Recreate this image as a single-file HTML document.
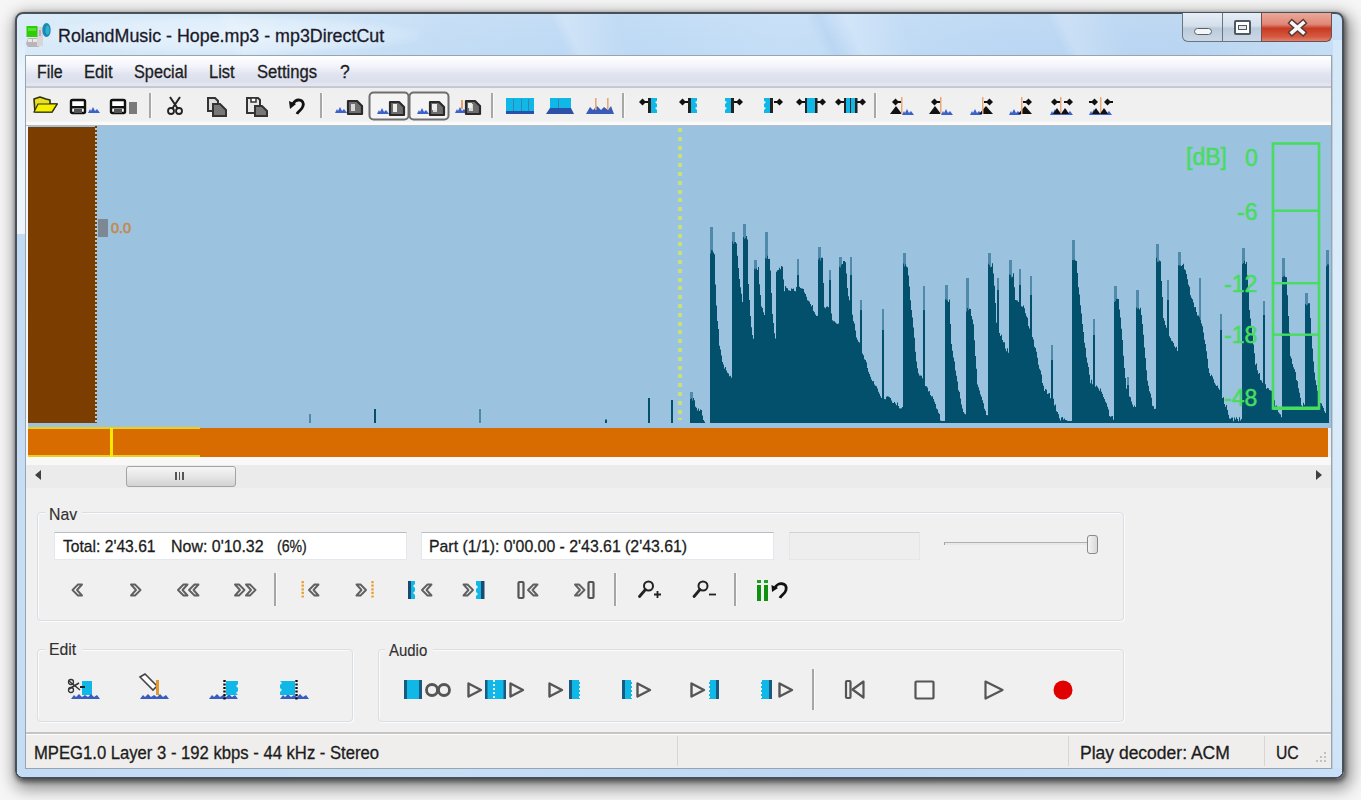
<!DOCTYPE html>
<html><head><meta charset="utf-8">
<style>
*{box-sizing:border-box;margin:0;padding:0}
html,body{width:1361px;height:800px;overflow:hidden;background:#f6f6f6;font-family:"Liberation Sans",sans-serif;}
.a{position:absolute}
.t{position:absolute;white-space:pre;color:#1c1c1c;transform-origin:0 0;line-height:1;-webkit-text-stroke:0.3px currentColor}
#win{left:15px;top:12px;width:1329px;height:767px;border-radius:8px;border:2px solid #4a5058;
 background:linear-gradient(90deg,#d8eaf8 0%,#cfe4f7 20%,#c2dcf5 32%,#bcd8f4 45%,#c4def7 58%,#bad6f3 75%,#b8d4f1 88%,#c6def5 100%);
 box-shadow:1px 2px 4px 1px rgba(0,0,0,0.45),3px 6px 16px 4px rgba(0,0,0,0.42);}
#client{left:25px;top:55px;width:1307px;height:714px;background:#f0f0f0;border:1px solid #98a4b0;box-shadow:1px 0 0 #c0ccd8}
svg{overflow:visible}
</style></head><body>
<div id="win" class="a"></div>
<div class="a" style="left:17px;top:14px;width:1325px;height:42px;border-radius:6px 6px 0 0;background:linear-gradient(180deg,rgba(255,255,255,0.1),rgba(255,255,255,0))"></div>
<div class="a" style="left:17px;top:14px;width:1325px;height:42px;background:linear-gradient(65deg,transparent 16%,rgba(255,255,255,0.18) 17%,transparent 21%,transparent 41%,rgba(255,255,255,0.22) 42%,transparent 46%,transparent 60%,rgba(120,160,210,0.12) 61%,rgba(255,255,255,0.2) 63%,transparent 67%,transparent 78%,rgba(255,255,255,0.2) 79%,transparent 83%)"></div>
<div class="a" style="left:40px;top:16px;width:380px;height:38px;border-radius:20px;background:radial-gradient(ellipse at center,rgba(240,248,255,0.7) 0%,rgba(240,248,255,0.35) 55%,rgba(240,248,255,0) 75%)"></div>
<div class="a" style="left:17px;top:40px;width:8px;height:194px;background:linear-gradient(#dcecf8,#eaf4fc 15%,#eef6fc)"></div>
<div class="a" style="left:17px;top:234px;width:8px;height:540px;background:linear-gradient(#c2dbf4,#c8def5 60%,#c4dcf4)"></div>
<div class="a" style="left:1333px;top:40px;width:9px;height:734px;background:linear-gradient(#d4e8f8,#dcedfa 40%,#cfe4f7)"></div>
<div class="a" style="left:17px;top:768px;width:1325px;height:9px;border-radius:0 0 6px 6px;background:linear-gradient(90deg,#c4dcf4,#c8e0f6 30%,#bcd8f4 60%,#c8e0f8)"></div>
<div id="client" class="a"></div>
<!-- title icon -->
<svg class="a" style="left:20px;top:18px" width="40" height="32">
 <path d="M6 26 L8 20 H20 L22 27 L18 29 H8 Z" fill="#b8b4b8"/>
 <rect x="8" y="21" width="4" height="3" fill="#e8e8e8"/><rect x="13" y="21" width="4" height="3" fill="#e8e8e8"/>
 <rect x="17" y="9" width="6" height="19" fill="#d8d4d8"/><rect x="19" y="12" width="2" height="6" fill="#b8a8c8"/>
 <rect x="6.5" y="8" width="11" height="11" fill="#30cc08"/><rect x="8" y="10" width="8" height="3" fill="#58e030"/>
 <ellipse cx="26.5" cy="12" rx="4.2" ry="7" fill="#1a88b0"/><ellipse cx="27.5" cy="12" rx="2" ry="4.5" fill="#30b0d0"/>
</svg>
<div class="t" style="left:58px;top:27px;font-size:18.4px;color:#1a1a2a;transform:scaleX(0.97)">RolandMusic - Hope.mp3 - mp3DirectCut</div>
<!-- caption buttons -->
<div class="a" style="left:1182px;top:13px;width:41px;height:29px;border:1px solid #6a7480;border-top:none;border-radius:0 0 0 6px;background:linear-gradient(#e6eef6 0%,#d4e0ec 45%,#bccbdb 55%,#cad8e6 100%)"></div>
<div class="a" style="left:1222px;top:13px;width:40px;height:29px;border:1px solid #6a7480;border-top:none;background:linear-gradient(#e6eef6 0%,#d4e0ec 45%,#bccbdb 55%,#cad8e6 100%)"></div>
<div class="a" style="left:1261px;top:13px;width:71px;height:29px;border:1px solid #6a5050;border-top:none;border-radius:0 0 6px 0;background:linear-gradient(#eaa898 0%,#e08878 40%,#c83a22 55%,#d45a40 85%,#e08070 100%)"></div>
<div class="a" style="left:1194px;top:28px;width:18px;height:7px;border:1.5px solid #5a6068;border-radius:3.5px;background:#f4f6f8"></div>
<div class="a" style="left:1234px;top:20px;width:17px;height:15px;border:2px solid #505860;border-radius:2px;background:#fff"></div>
<div class="a" style="left:1238px;top:25px;width:9px;height:5px;border:1.5px solid #505860;background:#dfe8f0"></div>
<svg class="a" style="left:1286px;top:18px" width="24" height="20">
 <path d="M6 5 L17 14.5 M17 5 L6 14.5" stroke="#5a3a36" stroke-width="6.4" stroke-linecap="square"/>
 <path d="M6 5 L17 14.5 M17 5 L6 14.5" stroke="#f8f8f8" stroke-width="3.6" stroke-linecap="square"/>
</svg>
<!-- menu -->
<div class="a" style="left:26px;top:56px;width:1305px;height:32px;background:linear-gradient(#ffffff 0%,#f4f5fb 30%,#dfe2ef 60%,#dcdfec 80%,#e6e8f2 92%,#c8cad4 94%,#c4c6ce 100%)"></div>
<div class="t" style="left:37px;top:64px;font-size:17.5px;transform:scaleX(0.91)">File</div>
<div class="t" style="left:84px;top:64px;font-size:17.5px;transform:scaleX(0.95)">Edit</div>
<div class="t" style="left:134px;top:64px;font-size:17.5px;transform:scaleX(0.93)">Special</div>
<div class="t" style="left:209px;top:64px;font-size:17.5px;transform:scaleX(0.94)">List</div>
<div class="t" style="left:257px;top:64px;font-size:17.5px;transform:scaleX(0.95)">Settings</div>
<div class="t" style="left:340px;top:64px;font-size:17.5px">?</div>
<!-- toolbar -->
<div class="a" style="left:26px;top:88px;width:1305px;height:37px;background:linear-gradient(#eeeeee,#f0f0f0 20%,#f0f0f0 85%,#f8f8f8)"></div>
<svg class="a" style="left:0;top:0" width="1361" height="130">

<!-- folder -->
<path d="M34 99 L40 97 L46 99 L50 100 V104 L57 104 L52 112 H35 Z" fill="#e8e020" stroke="#303010" stroke-width="1.6" stroke-linejoin="round"/>
<path d="M38 104 H57 L52 112 H34 Z" fill="#f4f000" stroke="#303010" stroke-width="1.2"/>
<!-- save 1 -->
<rect x="71" y="100" width="14" height="13" rx="1.5" fill="#fff" stroke="#111" stroke-width="2.4"/>
<rect x="71" y="106" width="14" height="2.5" fill="#111"/><rect x="74" y="109" width="8" height="4" fill="#555"/>
<g transform="translate(88,105)"><path d="M0 8 L2 4 L3 6 L5 2 L7 6 L9 4 L12 8 Z" fill="#3a62c8"/></g>
<!-- save 2 -->
<rect x="111" y="100" width="14" height="13" rx="1.5" fill="#fff" stroke="#111" stroke-width="2.4"/>
<rect x="111" y="106" width="14" height="2.5" fill="#111"/><rect x="114" y="109" width="8" height="4" fill="#555"/>
<rect x="129" y="102" width="8" height="12" fill="#7a7a7a"/>
<g transform="translate(149,93)"><rect x="0" y="0" width="2" height="25" fill="#a8a8a8"/><rect x="2" y="0" width="1" height="25" fill="#fafafa"/></g>
<!-- scissors -->
<path d="M170 97 L178 109 M180 97 L172 109" stroke="#222" stroke-width="2"/>
<circle cx="171" cy="111" r="3" fill="none" stroke="#222" stroke-width="1.8"/><circle cx="179" cy="111" r="3" fill="none" stroke="#222" stroke-width="1.8"/>
<!-- copy -->
<path d="M208 98 H215 L218 101 V111 H208 Z" fill="#ddd" stroke="#333" stroke-width="2"/>
<path d="M213 104 H220 L226 110 V116 H213 Z" fill="#777" stroke="#333" stroke-width="2"/>
<!-- paste -->
<path d="M247 98 H258 L260 100 V113 H247 Z" fill="#e8e8e8" stroke="#333" stroke-width="2"/>
<rect x="251" y="98" width="5" height="4" fill="#fff" stroke="#333" stroke-width="1.5"/>
<path d="M255 106 H262 L267 111 V116 H255 Z" fill="#777" stroke="#333" stroke-width="2"/>
<!-- undo -->
<path d="M293 104 C296 98,305 99,303 106 C302 110,298 111,297 114" fill="none" stroke="#111" stroke-width="2.8"/>
<path d="M289 101 L296 104 L290 109 Z" fill="#111"/>
<g transform="translate(320,93)"><rect x="0" y="0" width="2" height="25" fill="#a8a8a8"/><rect x="2" y="0" width="1" height="25" fill="#fafafa"/></g>
<!-- wave+doc icons -->
<g transform="translate(335,105)"><path d="M0 8 L2 4 L3 6 L5 2 L7 6 L9 4 L12 8 Z" fill="#3a62c8"/></g><g transform="translate(347,100)"><path d="M1 1 H10 L15 6 V14 H1 Z" fill="#6e6e6e" stroke="#2a2a2a" stroke-width="2.2" stroke-linejoin="round"/><rect x="4" y="4" width="4" height="7" fill="#d8d8d8"/></g>
<rect x="369.5" y="92.5" width="39" height="27" rx="4" fill="#f4f4f4" stroke="#6e6e6e" stroke-width="2"/>
<g transform="translate(377,106)"><path d="M0 8 L2 4 L3 6 L5 2 L7 6 L9 4 L12 8 Z" fill="#3a62c8"/></g><g transform="translate(389,101)"><path d="M1 1 H10 L15 6 V14 H1 Z" fill="#6e6e6e" stroke="#2a2a2a" stroke-width="2.2" stroke-linejoin="round"/><rect x="4" y="4" width="4" height="7" fill="#d8d8d8"/></g><rect x="393" y="104" width="4" height="8" fill="#eee"/>
<rect x="409.5" y="92.5" width="39" height="27" rx="4" fill="#f4f4f4" stroke="#6e6e6e" stroke-width="2"/>
<g transform="translate(417,106)"><path d="M0 8 L2 4 L3 6 L5 2 L7 6 L9 4 L12 8 Z" fill="#3a62c8"/></g><g transform="translate(429,101)"><path d="M1 1 H10 L15 6 V14 H1 Z" fill="#6e6e6e" stroke="#2a2a2a" stroke-width="2.2" stroke-linejoin="round"/><rect x="4" y="4" width="4" height="7" fill="#d8d8d8"/></g><rect x="432" y="104" width="5" height="6" fill="#eee"/>
<g transform="translate(455,105)"><path d="M0 8 L2 4 L3 6 L5 2 L7 6 L9 4 L12 8 Z" fill="#3a62c8"/></g><rect x="461" y="100" width="2" height="9" fill="#e8a070"/><g transform="translate(465,100)"><path d="M1 1 H10 L15 6 V14 H1 Z" fill="#6e6e6e" stroke="#2a2a2a" stroke-width="2.2" stroke-linejoin="round"/><rect x="4" y="4" width="4" height="7" fill="#d8d8d8"/></g><rect x="468" y="103" width="4" height="5" fill="#eee"/>
<g transform="translate(491,93)"><rect x="0" y="0" width="2" height="25" fill="#a8a8a8"/><rect x="2" y="0" width="1" height="25" fill="#fafafa"/></g>
<!-- cyan blocks -->
<rect x="506" y="98" width="28" height="14" fill="#10b8e8"/><rect x="513" y="99" width="1" height="12" fill="#3a80b0"/><rect x="521" y="99" width="1" height="12" fill="#3a80b0"/><rect x="528" y="99" width="1" height="12" fill="#3a80b0"/>
<rect x="506" y="111" width="28" height="3" fill="#2a50a8"/>
<rect x="550" y="98" width="21" height="12" fill="#10b8e8"/><rect x="558" y="99" width="1" height="10" fill="#3a80b0"/>
<path d="M546 114 L550 108 H571 L574 114 Z" fill="#2a50a8"/>
<path d="M586 114 L590 107 L593 110 L597 106 L601 110 L604 107 L608 110 L611 106 L614 114 Z" fill="#3a5cb8"/>
<rect x="595" y="98" width="1.6" height="12" fill="#e6a878"/><rect x="607" y="98" width="1.6" height="12" fill="#e6a878"/>
<g transform="translate(622,93)"><rect x="0" y="0" width="2" height="25" fill="#a8a8a8"/><rect x="2" y="0" width="1" height="25" fill="#fafafa"/></g>
<!-- arrow + cyan bars -->
<g transform="translate(639,98)"><path d="M0 4 L3.5 0.5 L7 4 L3.5 7.5 Z" fill="#111"/><rect x="5" y="3" width="4" height="2" fill="#111"/></g><rect x="648" y="98" width="3" height="15" fill="#222"/><path d="M651 98 H657 V101 L655 102 L657 104 V107 L655 108 L657 110 V113 H651 Z" fill="#10b8e8"/>
<g transform="translate(679,98)"><path d="M0 4 L3.5 0.5 L7 4 L3.5 7.5 Z" fill="#111"/><rect x="5" y="3" width="4" height="2" fill="#111"/></g><rect x="688" y="98" width="3" height="15" fill="#222"/><path d="M691 98 H697 V101 L695 102 L697 104 V107 L695 108 L697 110 V113 H691 Z" fill="#10b8e8"/>
<path d="M725 98 H731 V113 H725 V110 L727 108 L725 107 V104 L727 102 L725 101 Z" fill="#10b8e8"/><rect x="731" y="98" width="3" height="15" fill="#222"/><g transform="translate(734,98)"><path d="M9 4 L5.5 0.5 L2 4 L5.5 7.5 Z" fill="#111"/><rect x="0" y="3" width="4" height="2" fill="#111"/></g>
<path d="M764 98 H770 V113 H764 V110 L766 108 L764 107 V104 L766 102 L764 101 Z" fill="#10b8e8"/><rect x="770" y="98" width="3" height="15" fill="#222"/><g transform="translate(774,98)"><path d="M9 4 L5.5 0.5 L2 4 L5.5 7.5 Z" fill="#111"/><rect x="0" y="3" width="4" height="2" fill="#111"/></g>
<g transform="translate(796,98)"><path d="M0 4 L3.5 0.5 L7 4 L3.5 7.5 Z" fill="#111"/><rect x="5" y="3" width="4" height="2" fill="#111"/></g><rect x="805" y="98" width="2.5" height="15" fill="#222"/><rect x="807" y="98" width="9" height="15" fill="#10b8e8"/><rect x="815" y="98" width="2.5" height="15" fill="#222"/><g transform="translate(817,98)"><path d="M9 4 L5.5 0.5 L2 4 L5.5 7.5 Z" fill="#111"/><rect x="0" y="3" width="4" height="2" fill="#111"/></g>
<g transform="translate(835,98)"><path d="M0 4 L3.5 0.5 L7 4 L3.5 7.5 Z" fill="#111"/><rect x="5" y="3" width="4" height="2" fill="#111"/></g><rect x="844" y="98" width="2.5" height="15" fill="#222"/><rect x="846" y="98" width="4" height="15" fill="#10b8e8"/><rect x="850" y="98" width="1.5" height="15" fill="#222"/><rect x="851" y="98" width="4" height="15" fill="#10b8e8"/><rect x="855" y="98" width="2.5" height="15" fill="#222"/><g transform="translate(857,98)"><path d="M9 4 L5.5 0.5 L2 4 L5.5 7.5 Z" fill="#111"/><rect x="0" y="3" width="4" height="2" fill="#111"/></g>
<g transform="translate(874,93)"><rect x="0" y="0" width="2" height="25" fill="#a8a8a8"/><rect x="2" y="0" width="1" height="25" fill="#fafafa"/></g>
<!-- marker icons -->
<g><path d="M890 114 L896 106 L902 114 Z" fill="#111"/><g transform="translate(892,98)"><path d="M0 4 L3.5 0.5 L7 4 L3.5 7.5 Z" fill="#111"/><rect x="5" y="3" width="4" height="2" fill="#111"/></g><rect x="901" y="97" width="1.5" height="17" fill="#e6a878"/><g transform="translate(902,107)"><path d="M0 8 L2 4 L3 6 L5 2 L7 6 L9 4 L12 8 Z" fill="#3a62c8"/></g></g>
<g transform="translate(39,0)"><path d="M890 114 L896 106 L902 114 Z" fill="#111"/><g transform="translate(892,98)"><path d="M0 4 L3.5 0.5 L7 4 L3.5 7.5 Z" fill="#111"/><rect x="5" y="3" width="4" height="2" fill="#111"/></g><rect x="901" y="97" width="1.5" height="17" fill="#e6a878"/><g transform="translate(902,107)"><path d="M0 8 L2 4 L3 6 L5 2 L7 6 L9 4 L12 8 Z" fill="#3a62c8"/></g></g>
<g><g transform="translate(970,107)"><path d="M0 8 L2 4 L3 6 L5 2 L7 6 L9 4 L12 8 Z" fill="#3a62c8"/></g><path d="M979 114 L986 106 L993 114 Z" fill="#111"/><rect x="982" y="97" width="1.5" height="17" fill="#e6a878"/><g transform="translate(984,98)"><path d="M9 4 L5.5 0.5 L2 4 L5.5 7.5 Z" fill="#111"/><rect x="0" y="3" width="4" height="2" fill="#111"/></g></g>
<g transform="translate(39,0)"><g transform="translate(970,107)"><path d="M0 8 L2 4 L3 6 L5 2 L7 6 L9 4 L12 8 Z" fill="#3a62c8"/></g><path d="M979 114 L986 106 L993 114 Z" fill="#111"/><rect x="982" y="97" width="1.5" height="17" fill="#e6a878"/><g transform="translate(984,98)"><path d="M9 4 L5.5 0.5 L2 4 L5.5 7.5 Z" fill="#111"/><rect x="0" y="3" width="4" height="2" fill="#111"/></g></g>
<g><g transform="translate(1050,107)"><path d="M0 8 L2 4 L3 6 L5 2 L7 6 L9 4 L12 8 Z" fill="#3a62c8"/></g><g transform="translate(1061,107)"><path d="M0 8 L2 4 L3 6 L5 2 L7 6 L9 4 L12 8 Z" fill="#3a62c8"/></g><g transform="translate(1051,98)"><path d="M0 4 L3.5 0.5 L7 4 L3.5 7.5 Z" fill="#111"/><rect x="5" y="3" width="4" height="2" fill="#111"/></g><g transform="translate(1064,98)"><path d="M9 4 L5.5 0.5 L2 4 L5.5 7.5 Z" fill="#111"/><rect x="0" y="3" width="4" height="2" fill="#111"/></g><rect x="1060" y="97" width="1.5" height="17" fill="#e6a878"/><path d="M1053 114 L1057 108 L1061 114 Z M1061 114 L1065 108 L1069 114 Z" fill="#111"/></g>
<g><g transform="translate(1089,107)"><path d="M0 8 L2 4 L3 6 L5 2 L7 6 L9 4 L12 8 Z" fill="#3a62c8"/></g><g transform="translate(1100,107)"><path d="M0 8 L2 4 L3 6 L5 2 L7 6 L9 4 L12 8 Z" fill="#3a62c8"/></g><g transform="translate(1089,98)"><path d="M9 4 L5.5 0.5 L2 4 L5.5 7.5 Z" fill="#111"/><rect x="0" y="3" width="4" height="2" fill="#111"/></g><g transform="translate(1104,98)"><path d="M0 4 L3.5 0.5 L7 4 L3.5 7.5 Z" fill="#111"/><rect x="5" y="3" width="4" height="2" fill="#111"/></g><rect x="1100" y="97" width="1.5" height="17" fill="#e6a878"/><path d="M1092 114 L1096 108 L1100 114 Z M1100 114 L1104 108 L1108 114 Z" fill="#111"/></g>
</svg>
<!-- waveform area -->
<div class="a" style="left:26px;top:122px;width:1305px;height:3px;background:#fafafa"></div>
<div class="a" style="left:26px;top:125px;width:1305px;height:1px;background:#b4bec8"></div>
<div class="a" style="left:27px;top:126px;width:1304px;height:302px;background:#9bc2df"></div>
<div class="a" style="left:28px;top:127px;width:68px;height:296px;background:#7c3e00"></div>
<div class="a" style="left:26px;top:126px;width:2px;height:332px;background:#f4f6f8"></div>
<div class="a" style="left:95px;top:126px;width:2px;height:297px;background:repeating-linear-gradient(#7c3e00 0,#7c3e00 2px,#b8ccd8 2px,#b8ccd8 4px)"></div>
<div class="a" style="left:98px;top:219px;width:10px;height:18px;background:#7c8894"></div>
<div class="t" style="left:111px;top:221px;font-size:14.5px;color:#c48a50;-webkit-text-stroke:0.6px #c48a50">0.0</div>
<div class="a" style="left:678px;top:128px;width:4px;height:292px;background:repeating-linear-gradient(#c6e07a 0,#c6e07a 4px,transparent 4px,transparent 8.8px)"></div>
<svg class="a" style="left:0;top:0" width="1361" height="800">
<rect x="690" y="392" width="3" height="12" fill="#4f8aaa"/>
<rect x="710" y="227" width="3" height="29" fill="#4f8aaa"/>
<rect x="732" y="232" width="3" height="15" fill="#4f8aaa"/>
<rect x="743" y="224" width="3" height="17" fill="#4f8aaa"/>
<rect x="754" y="260" width="3" height="12" fill="#4f8aaa"/>
<rect x="765" y="232" width="3" height="30" fill="#4f8aaa"/>
<rect x="776" y="272" width="3" height="4" fill="#4f8aaa"/>
<rect x="818" y="247" width="3" height="17" fill="#4f8aaa"/>
<rect x="839" y="257" width="3" height="12" fill="#4f8aaa"/>
<rect x="903" y="253" width="3" height="16" fill="#4f8aaa"/>
<rect x="945" y="285" width="3" height="19" fill="#4f8aaa"/>
<rect x="966" y="278" width="3" height="36" fill="#4f8aaa"/>
<rect x="988" y="253" width="3" height="16" fill="#4f8aaa"/>
<rect x="1009" y="260" width="3" height="19" fill="#4f8aaa"/>
<rect x="1072" y="240" width="3" height="26" fill="#4f8aaa"/>
<rect x="1114" y="286" width="3" height="18" fill="#4f8aaa"/>
<rect x="1136" y="290" width="3" height="24" fill="#4f8aaa"/>
<rect x="1156" y="244" width="3" height="20" fill="#4f8aaa"/>
<rect x="1178" y="252" width="3" height="17" fill="#4f8aaa"/>
<rect x="1242" y="248" width="3" height="18" fill="#4f8aaa"/>
<rect x="1282" y="258" width="3" height="21" fill="#4f8aaa"/>
<rect x="1305" y="293" width="3" height="16" fill="#4f8aaa"/>
<rect x="1326" y="250" width="3" height="19" fill="#4f8aaa"/>
<rect x="797" y="259" width="2" height="164" fill="#4f8aaa"/>
<rect x="797" y="275" width="2" height="148" fill="#03506c"/>
<rect x="829" y="270" width="2" height="153" fill="#4f8aaa"/>
<rect x="829" y="280" width="2" height="143" fill="#03506c"/>
<rect x="850" y="257" width="2" height="166" fill="#4f8aaa"/>
<rect x="850" y="275" width="2" height="148" fill="#03506c"/>
<rect x="860" y="300" width="2" height="123" fill="#4f8aaa"/>
<rect x="860" y="310" width="2" height="113" fill="#03506c"/>
<rect x="882" y="309" width="2" height="114" fill="#4f8aaa"/>
<rect x="882" y="330" width="2" height="93" fill="#03506c"/>
<rect x="923" y="286" width="2" height="137" fill="#4f8aaa"/>
<rect x="923" y="310" width="2" height="113" fill="#03506c"/>
<rect x="997" y="278" width="2" height="145" fill="#4f8aaa"/>
<rect x="997" y="290" width="2" height="133" fill="#03506c"/>
<rect x="1019" y="269" width="2" height="154" fill="#4f8aaa"/>
<rect x="1019" y="285" width="2" height="138" fill="#03506c"/>
<rect x="1030" y="276" width="2" height="147" fill="#4f8aaa"/>
<rect x="1030" y="295" width="2" height="128" fill="#03506c"/>
<rect x="1051" y="345" width="2" height="78" fill="#4f8aaa"/>
<rect x="1051" y="360" width="2" height="63" fill="#03506c"/>
<rect x="1093" y="319" width="2" height="104" fill="#4f8aaa"/>
<rect x="1093" y="335" width="2" height="88" fill="#03506c"/>
<rect x="1127" y="377" width="2" height="46" fill="#4f8aaa"/>
<rect x="1127" y="385" width="2" height="38" fill="#03506c"/>
<rect x="1167" y="280" width="2" height="143" fill="#4f8aaa"/>
<rect x="1167" y="300" width="2" height="123" fill="#03506c"/>
<rect x="1199" y="278" width="2" height="145" fill="#4f8aaa"/>
<rect x="1199" y="320" width="2" height="103" fill="#03506c"/>
<rect x="1220" y="314" width="2" height="109" fill="#4f8aaa"/>
<rect x="1220" y="330" width="2" height="93" fill="#03506c"/>
<rect x="1263" y="301" width="2" height="122" fill="#4f8aaa"/>
<rect x="1263" y="315" width="2" height="108" fill="#03506c"/>
<rect x="309" y="414" width="2" height="9" fill="#4f8aaa"/>
<rect x="309" y="423" width="2" height="0" fill="#03506c"/>
<rect x="605" y="419" width="2" height="4" fill="#4f8aaa"/>
<rect x="605" y="420" width="2" height="3" fill="#03506c"/>
<rect x="374" y="409" width="2" height="14" fill="#4f8aaa"/>
<rect x="374" y="409" width="2" height="14" fill="#03506c"/>
<rect x="479" y="409" width="2" height="14" fill="#4f8aaa"/>
<rect x="479" y="423" width="2" height="0" fill="#03506c"/>
<rect x="648" y="398" width="2" height="25" fill="#4f8aaa"/>
<rect x="648" y="398" width="2" height="25" fill="#03506c"/>
<rect x="671" y="400" width="2" height="23" fill="#4f8aaa"/>
<rect x="671" y="400" width="2" height="23" fill="#03506c"/>
<polygon points="688,423 688,423 689,423 689,423 690,423 690,399.1 691,399.1 691,398.3 692,398.3 692,400.8 693,400.8 693,397.9 694,397.9 694,400.2 695,400.2 695,406.8 696,406.8 696,407.8 697,407.8 697,410.4 698,410.4 698,408.5 699,408.5 699,410.9 700,410.9 700,409.4 701,409.4 701,410.0 702,410.0 702,415.6 703,415.6 703,420.0 704,420.0 704,421.5 705,421.5 705,423 706,423 706,423 707,423 707,423 708,423 708,423 709,423 709,423 710,423 710,253.6 711,253.6 711,250.1 712,250.1 712,250.6 713,250.6 713,252.6 714,252.6 714,254.2 715,254.2 715,284.4 716,284.4 716,305.5 717,305.5 717,321.0 718,321.0 718,329.1 719,329.1 719,345.8 720,345.8 720,349.6 721,349.6 721,355.6 722,355.6 722,362.1 723,362.1 723,364.5 724,364.5 724,368.6 725,368.6 725,366.9 726,366.9 726,370.4 727,370.4 727,372.7 728,372.7 728,373.4 729,373.4 729,376.2 730,376.2 730,375.8 731,375.8 731,377.8 732,377.8 732,241.5 733,241.5 733,243.9 734,243.9 734,242.6 735,242.6 735,242.1 736,242.1 736,243.4 737,243.4 737,255.8 738,255.8 738,268.0 739,268.0 739,279.1 740,279.1 740,287.3 741,287.3 741,293.7 742,293.7 742,302.0 743,302.0 743,237.1 744,237.1 744,238.9 745,238.9 745,238.1 746,238.1 746,235.9 747,235.9 747,239.4 748,239.4 748,284.1 749,284.1 749,299.9 750,299.9 750,316.0 751,316.0 751,327.3 752,327.3 752,334.9 753,334.9 753,338.7 754,338.7 754,268.8 755,268.8 755,269.3 756,269.3 756,268.4 757,268.4 757,269.9 758,269.9 758,267.1 759,267.1 759,284.3 760,284.3 760,295.1 761,295.1 761,306.4 762,306.4 762,308.0 763,308.0 763,312.2 764,312.2 764,315.0 765,315.0 765,257.9 766,257.9 766,258.8 767,258.8 767,255.8 768,255.8 768,259.0 769,259.0 769,258.7 770,258.7 770,270.5 771,270.5 771,293.1 772,293.1 772,313.9 773,313.9 773,323.1 774,323.1 774,333.2 775,333.2 775,338.6 776,338.6 776,271.8 777,271.8 777,270.3 778,270.3 778,270.1 779,270.1 779,267.8 780,267.8 780,269.3 781,269.3 781,266.1 782,266.1 782,266.7 783,266.7 783,279.5 784,279.5 784,291.2 785,291.2 785,285.9 786,285.9 786,287.7 787,287.7 787,288.2 788,288.2 788,290.3 789,290.3 789,290.4 790,290.4 790,291.0 791,291.0 791,288.5 792,288.5 792,289.1 793,289.1 793,288.6 794,288.6 794,291.0 795,291.0 795,291.2 796,291.2 796,286.9 797,286.9 797,286.8 798,286.8 798,286.9 799,286.9 799,286.7 800,286.7 800,287.9 801,287.9 801,288.4 802,288.4 802,288.5 803,288.5 803,288.9 804,288.9 804,292.6 805,292.6 805,294.0 806,294.0 806,296.7 807,296.7 807,300.3 808,300.3 808,300.8 809,300.8 809,301.7 810,301.7 810,304.1 811,304.1 811,306.2 812,306.2 812,304.9 813,304.9 813,311.0 814,311.0 814,312.2 815,312.2 815,314.5 816,314.5 816,315.9 817,315.9 817,315.7 818,315.7 818,259.5 819,259.5 819,258.0 820,258.0 820,260.7 821,260.7 821,257.8 822,257.8 822,257.8 823,257.8 823,283.0 824,283.0 824,307.3 825,307.3 825,308.2 826,308.2 826,306.8 827,306.8 827,306.5 828,306.5 828,307.3 829,307.3 829,309.3 830,309.3 830,313.0 831,313.0 831,313.6 832,313.6 832,320.2 833,320.2 833,321.2 834,321.2 834,321.2 835,321.2 835,322.4 836,322.4 836,323.4 837,323.4 837,324.1 838,324.1 838,323.5 839,323.5 839,266.7 840,266.7 840,267.5 841,267.5 841,264.8 842,264.8 842,263.9 843,263.9 843,260.9 844,260.9 844,261.0 845,261.0 845,262.2 846,262.2 846,273.5 847,273.5 847,288.0 848,288.0 848,296.3 849,296.3 849,300.2 850,300.2 850,309.5 851,309.5 851,312.0 852,312.0 852,314.7 853,314.7 853,321.3 854,321.3 854,323.4 855,323.4 855,330.5 856,330.5 856,337.4 857,337.4 857,339.7 858,339.7 858,341.7 859,341.7 859,342.4 860,342.4 860,345.8 861,345.8 861,347.7 862,347.7 862,353.6 863,353.6 863,355.2 864,355.2 864,359.3 865,359.3 865,359.9 866,359.9 866,362.3 867,362.3 867,368.1 868,368.1 868,371.8 869,371.8 869,374.0 870,374.0 870,376.7 871,376.7 871,379.6 872,379.6 872,381.3 873,381.3 873,380.9 874,380.9 874,384.5 875,384.5 875,385.8 876,385.8 876,386.3 877,386.3 877,388.4 878,388.4 878,391.8 879,391.8 879,393.8 880,393.8 880,396.3 881,396.3 881,397.9 882,397.9 882,395.7 883,395.7 883,398.5 884,398.5 884,399.1 885,399.1 885,399.3 886,399.3 886,396.7 887,396.7 887,396.3 888,396.3 888,396.6 889,396.6 889,397.2 890,397.2 890,397.9 891,397.9 891,400.6 892,400.6 892,402.7 893,402.7 893,403.0 894,403.0 894,401.9 895,401.9 895,403.6 896,403.6 896,405.2 897,405.2 897,402.4 898,402.4 898,406.1 899,406.1 899,408.2 900,408.2 900,408.4 901,408.4 901,408.3 902,408.3 902,406.9 903,406.9 903,263.4 904,263.4 904,266.4 905,266.4 905,264.2 906,264.2 906,266.5 907,266.5 907,267.4 908,267.4 908,275.5 909,275.5 909,286.5 910,286.5 910,300.2 911,300.2 911,310.1 912,310.1 912,317.5 913,317.5 913,327.5 914,327.5 914,337.8 915,337.8 915,351.7 916,351.7 916,361.4 917,361.4 917,368.2 918,368.2 918,373.2 919,373.2 919,375.6 920,375.6 920,375.6 921,375.6 921,375.7 922,375.7 922,378.2 923,378.2 923,378.0 924,378.0 924,379.3 925,379.3 925,386.0 926,386.0 926,386.3 927,386.3 927,387.6 928,387.6 928,391.5 929,391.5 929,390.9 930,390.9 930,395.0 931,395.0 931,396.6 932,396.6 932,396.2 933,396.2 933,399.0 934,399.0 934,401.8 935,401.8 935,404.1 936,404.1 936,408.4 937,408.4 937,409.4 938,409.4 938,412.8 939,412.8 939,414.0 940,414.0 940,420.5 941,420.5 941,421.0 942,421.0 942,421.0 943,421.0 943,421.0 944,421.0 944,421.0 945,421.0 945,299.3 946,299.3 946,299.8 947,299.8 947,300.4 948,300.4 948,302.0 949,302.0 949,299.6 950,299.6 950,324.1 951,324.1 951,344.0 952,344.0 952,350.8 953,350.8 953,357.5 954,357.5 954,361.6 955,361.6 955,370.4 956,370.4 956,375.7 957,375.7 957,381.5 958,381.5 958,390.3 959,390.3 959,392.0 960,392.0 960,398.4 961,398.4 961,404.5 962,404.5 962,408.4 963,408.4 963,412.1 964,412.1 964,413.6 965,413.6 965,414.3 966,414.3 966,311.4 967,311.4 967,308.0 968,308.0 968,310.3 969,310.3 969,308.7 970,308.7 970,308.9 971,308.9 971,316.0 972,316.0 972,319.4 973,319.4 973,324.3 974,324.3 974,340.3 975,340.3 975,356.1 976,356.1 976,368.7 977,368.7 977,384.6 978,384.6 978,387.2 979,387.2 979,390.5 980,390.5 980,394.6 981,394.6 981,396.7 982,396.7 982,400.3 983,400.3 983,403.2 984,403.2 984,408.8 985,408.8 985,410.8 986,410.8 986,414.9 987,414.9 987,415.2 988,415.2 988,263.8 989,263.8 989,265.3 990,265.3 990,267.2 991,267.2 991,266.7 992,266.7 992,263.2 993,263.2 993,273.6 994,273.6 994,285.7 995,285.7 995,302.9 996,302.9 996,322.7 997,322.7 997,324.4 998,324.4 998,329.8 999,329.8 999,332.9 1000,332.9 1000,336.0 1001,336.0 1001,334.8 1002,334.8 1002,340.1 1003,340.1 1003,342.3 1004,342.3 1004,342.2 1005,342.2 1005,348.4 1006,348.4 1006,351.3 1007,351.3 1007,348.3 1008,348.3 1008,352.8 1009,352.8 1009,274.5 1010,274.5 1010,274.9 1011,274.9 1011,277.4 1012,277.4 1012,276.7 1013,276.7 1013,273.3 1014,273.3 1014,287.2 1015,287.2 1015,300.1 1016,300.1 1016,300.2 1017,300.2 1017,300.5 1018,300.5 1018,302.1 1019,302.1 1019,305.1 1020,305.1 1020,302.6 1021,302.6 1021,306.3 1022,306.3 1022,306.7 1023,306.7 1023,305.6 1024,305.6 1024,308.2 1025,308.2 1025,313.3 1026,313.3 1026,316.3 1027,316.3 1027,317.7 1028,317.7 1028,326.0 1029,326.0 1029,328.6 1030,328.6 1030,333.2 1031,333.2 1031,332.5 1032,332.5 1032,336.9 1033,336.9 1033,339.4 1034,339.4 1034,346.8 1035,346.8 1035,347.9 1036,347.9 1036,351.7 1037,351.7 1037,357.7 1038,357.7 1038,364.7 1039,364.7 1039,368.8 1040,368.8 1040,370.6 1041,370.6 1041,374.6 1042,374.6 1042,383.0 1043,383.0 1043,385.8 1044,385.8 1044,391.0 1045,391.0 1045,388.9 1046,388.9 1046,389.8 1047,389.8 1047,393.9 1048,393.9 1048,393.6 1049,393.6 1049,392.9 1050,392.9 1050,398.2 1051,398.2 1051,397.7 1052,397.7 1052,399.5 1053,399.5 1053,398.8 1054,398.8 1054,405.5 1055,405.5 1055,404.4 1056,404.4 1056,411.2 1057,411.2 1057,412.1 1058,412.1 1058,414.3 1059,414.3 1059,418.3 1060,418.3 1060,420.5 1061,420.5 1061,417.5 1062,417.5 1062,417.1 1063,417.1 1063,419.5 1064,419.5 1064,418.4 1065,418.4 1065,420.0 1066,420.0 1066,420.3 1067,420.3 1067,420.7 1068,420.7 1068,421.0 1069,421.0 1069,421.0 1070,421.0 1070,421.0 1071,421.0 1071,421.0 1072,421.0 1072,260.0 1073,260.0 1073,260.3 1074,260.3 1074,259.8 1075,259.8 1075,260.5 1076,260.5 1076,261.1 1077,261.1 1077,273.0 1078,273.0 1078,287.3 1079,287.3 1079,294.6 1080,294.6 1080,305.3 1081,305.3 1081,313.4 1082,313.4 1082,323.9 1083,323.9 1083,331.9 1084,331.9 1084,342.8 1085,342.8 1085,347.7 1086,347.7 1086,357.5 1087,357.5 1087,362.8 1088,362.8 1088,367.1 1089,367.1 1089,374.7 1090,374.7 1090,383.2 1091,383.2 1091,379.8 1092,379.8 1092,384.2 1093,384.2 1093,383.1 1094,383.1 1094,384.2 1095,384.2 1095,386.8 1096,386.8 1096,385.4 1097,385.4 1097,386.8 1098,386.8 1098,388.5 1099,388.5 1099,390.8 1100,390.8 1100,388.4 1101,388.4 1101,391.7 1102,391.7 1102,394.1 1103,394.1 1103,396.9 1104,396.9 1104,398.9 1105,398.9 1105,401.7 1106,401.7 1106,403.3 1107,403.3 1107,406.8 1108,406.8 1108,409.6 1109,409.6 1109,416.1 1110,416.1 1110,416.8 1111,416.8 1111,416.3 1112,416.3 1112,415.9 1113,415.9 1113,419.7 1114,419.7 1114,301.9 1115,301.9 1115,300.9 1116,300.9 1116,298.9 1117,298.9 1117,298.7 1118,298.7 1118,299.0 1119,299.0 1119,309.5 1120,309.5 1120,317.6 1121,317.6 1121,328.7 1122,328.7 1122,340.0 1123,340.0 1123,355.7 1124,355.7 1124,368.0 1125,368.0 1125,378.0 1126,378.0 1126,388.7 1127,388.7 1127,394.8 1128,394.8 1128,393.9 1129,393.9 1129,396.6 1130,396.6 1130,397.2 1131,397.2 1131,401.6 1132,401.6 1132,404.4 1133,404.4 1133,407.0 1134,407.0 1134,405.5 1135,405.5 1135,407.0 1136,407.0 1136,307.5 1137,307.5 1137,308.8 1138,308.8 1138,307.9 1139,307.9 1139,309.5 1140,309.5 1140,307.7 1141,307.7 1141,315.1 1142,315.1 1142,324.0 1143,324.0 1143,334.7 1144,334.7 1144,347.4 1145,347.4 1145,358.1 1146,358.1 1146,370.3 1147,370.3 1147,380.8 1148,380.8 1148,385.7 1149,385.7 1149,391.2 1150,391.2 1150,393.4 1151,393.4 1151,397.8 1152,397.8 1152,405.8 1153,405.8 1153,406.2 1154,406.2 1154,409.1 1155,409.1 1155,408.7 1156,408.7 1156,257.7 1157,257.7 1157,261.7 1158,261.7 1158,262.0 1159,262.0 1159,260.6 1160,260.6 1160,261.2 1161,261.2 1161,280.9 1162,280.9 1162,296.9 1163,296.9 1163,318.1 1164,318.1 1164,320.7 1165,320.7 1165,325.1 1166,325.1 1166,327.7 1167,327.7 1167,330.5 1168,330.5 1168,332.1 1169,332.1 1169,336.3 1170,336.3 1170,338.0 1171,338.0 1171,340.8 1172,340.8 1172,341.2 1173,341.2 1173,342.9 1174,342.9 1174,346.2 1175,346.2 1175,347.7 1176,347.7 1176,346.8 1177,346.8 1177,350.9 1178,350.9 1178,265.3 1179,265.3 1179,265.6 1180,265.6 1180,265.6 1181,265.6 1181,265.9 1182,265.9 1182,264.9 1183,264.9 1183,263.8 1184,263.8 1184,269.2 1185,269.2 1185,270.2 1186,270.2 1186,274.0 1187,274.0 1187,279.2 1188,279.2 1188,284.8 1189,284.8 1189,286.8 1190,286.8 1190,295.2 1191,295.2 1191,297.8 1192,297.8 1192,299.2 1193,299.2 1193,302.6 1194,302.6 1194,307.2 1195,307.2 1195,307.0 1196,307.0 1196,312.0 1197,312.0 1197,315.6 1198,315.6 1198,315.5 1199,315.5 1199,317.3 1200,317.3 1200,320.2 1201,320.2 1201,323.6 1202,323.6 1202,326.3 1203,326.3 1203,332.6 1204,332.6 1204,339.7 1205,339.7 1205,343.9 1206,343.9 1206,351.2 1207,351.2 1207,358.8 1208,358.8 1208,368.2 1209,368.2 1209,373.0 1210,373.0 1210,375.9 1211,375.9 1211,374.7 1212,374.7 1212,376.6 1213,376.6 1213,379.2 1214,379.2 1214,382.8 1215,382.8 1215,384.5 1216,384.5 1216,386.0 1217,386.0 1217,385.6 1218,385.6 1218,388.3 1219,388.3 1219,389.7 1220,389.7 1220,391.2 1221,391.2 1221,391.1 1222,391.1 1222,397.9 1223,397.9 1223,397.3 1224,397.3 1224,404.1 1225,404.1 1225,406.7 1226,406.7 1226,405.0 1227,405.0 1227,410.1 1228,410.1 1228,414.8 1229,414.8 1229,418.5 1230,418.5 1230,418.7 1231,418.7 1231,417.8 1232,417.8 1232,417.5 1233,417.5 1233,421.2 1234,421.2 1234,417.6 1235,417.6 1235,419.4 1236,419.4 1236,417.2 1237,417.2 1237,419.1 1238,419.1 1238,421.3 1239,421.3 1239,417.2 1240,417.2 1240,420.6 1241,420.6 1241,419.0 1242,419.0 1242,263.9 1243,263.9 1243,263.0 1244,263.0 1244,260.7 1245,260.7 1245,264.0 1246,264.0 1246,261.9 1247,261.9 1247,275.6 1248,275.6 1248,291.5 1249,291.5 1249,310.0 1250,310.0 1250,318.6 1251,318.6 1251,326.7 1252,326.7 1252,334.7 1253,334.7 1253,344.6 1254,344.6 1254,353.2 1255,353.2 1255,364.7 1256,364.7 1256,363.5 1257,363.5 1257,370.3 1258,370.3 1258,373.7 1259,373.7 1259,373.1 1260,373.1 1260,380.1 1261,380.1 1261,380.4 1262,380.4 1262,382.7 1263,382.7 1263,381.0 1264,381.0 1264,382.8 1265,382.8 1265,384.3 1266,384.3 1266,388.7 1267,388.7 1267,388.0 1268,388.0 1268,388.2 1269,388.2 1269,389.9 1270,389.9 1270,390.5 1271,390.5 1271,390.7 1272,390.7 1272,393.8 1273,393.8 1273,400.2 1274,400.2 1274,400.2 1275,400.2 1275,406.2 1276,406.2 1276,405.5 1277,405.5 1277,408.3 1278,408.3 1278,412.3 1279,412.3 1279,413.4 1280,413.4 1280,414.4 1281,414.4 1281,417.3 1282,417.3 1282,276.9 1283,276.9 1283,276.6 1284,276.6 1284,275.7 1285,275.7 1285,277.1 1286,277.1 1286,277.2 1287,277.2 1287,295.2 1288,295.2 1288,316.1 1289,316.1 1289,332.7 1290,332.7 1290,356.2 1291,356.2 1291,358.6 1292,358.6 1292,363.9 1293,363.9 1293,367.2 1294,367.2 1294,369.3 1295,369.3 1295,371.9 1296,371.9 1296,380.1 1297,380.1 1297,381.3 1298,381.3 1298,388.3 1299,388.3 1299,392.8 1300,392.8 1300,397.8 1301,397.8 1301,405.2 1302,405.2 1302,406.4 1303,406.4 1303,402.8 1304,402.8 1304,404.8 1305,404.8 1305,304.0 1306,304.0 1306,305.3 1307,305.3 1307,304.5 1308,304.5 1308,303.3 1309,303.3 1309,303.3 1310,303.3 1310,318.0 1311,318.0 1311,336.0 1312,336.0 1312,348.5 1313,348.5 1313,361.6 1314,361.6 1314,372.4 1315,372.4 1315,380.3 1316,380.3 1316,384.9 1317,384.9 1317,390.8 1318,390.8 1318,398.5 1319,398.5 1319,399.8 1320,399.8 1320,402.9 1321,402.9 1321,403.5 1322,403.5 1322,406.0 1323,406.0 1323,408.0 1324,408.0 1324,411.3 1325,411.3 1325,412.9 1326,412.9 1326,266.2 1327,266.2 1327,264.6 1328,264.6 1328,264.6 1329,264.6 1329,423" fill="#03506c"/>
</svg>
<!-- dB meter -->
<svg class="a" style="left:0;top:0" width="1361" height="430">
 <rect x="1273" y="143.5" width="46" height="265" fill="none" stroke="#48dc60" stroke-width="2.6"/>
 <rect x="1273" y="209.5" width="46" height="2.4" fill="#48dc60"/>
 <rect x="1273" y="282" width="46" height="2.4" fill="#48dc60"/>
 <rect x="1273" y="333.5" width="46" height="2.4" fill="#48dc60"/>
 <rect x="1273" y="406.5" width="46" height="3.5" fill="#48dc60"/>
</svg>
<div class="t" style="left:1186px;top:146px;font-size:23px;color:#48dc60;-webkit-text-stroke:0.5px #48dc60">[dB]</div>
<div class="t" style="left:1245px;top:147px;font-size:23px;color:#48dc60;-webkit-text-stroke:0.5px #48dc60">0</div>
<div class="t" style="left:1237px;top:201px;font-size:23px;color:#48dc60;-webkit-text-stroke:0.5px #48dc60">-6</div>
<div class="t" style="left:1224px;top:273px;font-size:23px;color:#48dc60;-webkit-text-stroke:0.5px #48dc60">-12</div>
<div class="t" style="left:1224px;top:324px;font-size:23px;color:#48dc60;-webkit-text-stroke:0.5px #48dc60">-18</div>
<div class="t" style="left:1224px;top:387px;font-size:23px;color:#48dc60;-webkit-text-stroke:0.5px #48dc60">-48</div>
<!-- orange bar -->
<div class="a" style="left:28px;top:428px;width:1300px;height:29px;background:#d96c00"></div>
<div class="a" style="left:28px;top:427px;width:172px;height:2px;background:#e8d020"></div>
<div class="a" style="left:28px;top:455px;width:172px;height:2px;background:#e8d020"></div>
<div class="a" style="left:110px;top:428px;width:3px;height:29px;background:#ffe800"></div>
<!-- scrollbar -->
<div class="a" style="left:26px;top:457px;width:1305px;height:8px;background:#f8f8f8"></div>
<div class="a" style="left:26px;top:465px;width:1305px;height:23px;background:#ebebeb"></div>
<div class="a" style="left:126px;top:466px;width:110px;height:21px;border:1px solid #a4a4a4;border-radius:3px;background:linear-gradient(#f6f6f6,#e6e6e6 50%,#d2d2d2 100%)"></div>
<div class="a" style="left:175px;top:472px;width:10px;height:8px;background:repeating-linear-gradient(90deg,#555 0,#555 1.5px,transparent 1.5px,transparent 3.5px)"></div>
<svg class="a" style="left:0;top:460px" width="1361" height="30">
 <path d="M35 15 L41 10 V20 Z" fill="#404040"/>
 <path d="M1322 15 L1316 10 V20 Z" fill="#404040"/>
</svg>
<!-- group boxes -->
<div class="a" style="left:37px;top:512px;width:1087px;height:109px;border:1px solid #d8dee4;border-radius:4px;box-shadow:inset 1px 1px 0 #fbfbfb, 1px 1px 0 #fbfbfb"></div>
<div class="a" style="left:45px;top:505px;width:37px;height:14px;background:#f0f0f0"></div>
<div class="t" style="left:49px;top:506px;font-size:17px;transform:scaleX(0.93);color:#303030;-webkit-text-stroke:0.15px #303030">Nav</div>
<div class="a" style="left:37px;top:649px;width:316px;height:73px;border:1px solid #d8dee4;border-radius:4px;box-shadow:inset 1px 1px 0 #fbfbfb, 1px 1px 0 #fbfbfb"></div>
<div class="a" style="left:45px;top:641px;width:38px;height:14px;background:#f0f0f0"></div>
<div class="t" style="left:49px;top:641px;font-size:17px;transform:scaleX(0.93);color:#303030;-webkit-text-stroke:0.15px #303030">Edit</div>
<div class="a" style="left:378px;top:649px;width:746px;height:73px;border:1px solid #d8dee4;border-radius:4px;box-shadow:inset 1px 1px 0 #fbfbfb, 1px 1px 0 #fbfbfb"></div>
<div class="a" style="left:385px;top:641px;width:48px;height:14px;background:#f0f0f0"></div>
<div class="t" style="left:389px;top:642px;font-size:17px;transform:scaleX(0.88);color:#303030;-webkit-text-stroke:0.15px #303030">Audio</div>
<!-- fields -->
<div class="a" style="left:54px;top:532px;width:353px;height:28px;background:#fff;border:1px solid #e2e8ee;border-top-color:#b8bcc4"></div>
<div class="t" style="left:63px;top:538px;font-size:17px;transform:scaleX(0.92)">Total: 2'43.61</div>
<div class="t" style="left:171px;top:538px;font-size:17px;transform:scaleX(0.938)">Now: 0'10.32</div>
<div class="t" style="left:277px;top:538px;font-size:17px;transform:scaleX(0.83)">(6%)</div>
<div class="a" style="left:421px;top:532px;width:353px;height:28px;background:#fff;border:1px solid #e2e8ee;border-top-color:#b8bcc4"></div>
<div class="t" style="left:429px;top:538px;font-size:17px;transform:scaleX(0.931)">Part (1/1): 0'00.00 - 2'43.61 (2'43.61)</div>
<div class="a" style="left:789px;top:532px;width:131px;height:28px;background:#eeeeee;border:1px solid #e4e6e8;border-top-color:#d0d2d4"></div>
<!-- slider -->
<div class="a" style="left:944px;top:542px;width:148px;height:3px;background:#e8e8e8;border-top:1px solid #b0b0b0;border-left:1px solid #a0a0a0"></div>
<div class="a" style="left:1087px;top:535px;width:11px;height:19px;border:1px solid #8a8a8a;border-radius:3px;background:linear-gradient(90deg,#f4f4f4,#d8d8d8)"></div>
<!-- nav buttons -->
<svg class="a" style="left:0;top:0" width="1361" height="800">

<g transform="translate(70.5,583)"><g transform="translate(0,0)"><path d="M11.5 1.5 L6.5 7 L11.5 12.5 H7.5 L2 7 L7.5 1.5 Z" fill="#f2f2f2" stroke="#606060" stroke-width="1.9" stroke-linejoin="round"/></g><g transform="translate(0,0)"><path d="M0 0"/></g></g>
<g transform="translate(129.5,583)"><g transform="translate(0,0)"><path d="M1.5 1.5 L6.5 7 L1.5 12.5 H5.5 L11 7 L5.5 1.5 Z" fill="#f2f2f2" stroke="#606060" stroke-width="1.9" stroke-linejoin="round"/></g><g transform="translate(0,0)"><path d="M0 0"/></g></g>
<g transform="translate(176,583)"><g transform="translate(0,0)"><path d="M11.5 1.5 L6.5 7 L11.5 12.5 H7.5 L2 7 L7.5 1.5 Z" fill="#f2f2f2" stroke="#606060" stroke-width="1.9" stroke-linejoin="round"/></g><g transform="translate(0,0)"><path d="M0 0"/></g></g><g transform="translate(187,583)"><g transform="translate(0,0)"><path d="M11.5 1.5 L6.5 7 L11.5 12.5 H7.5 L2 7 L7.5 1.5 Z" fill="#f2f2f2" stroke="#606060" stroke-width="1.9" stroke-linejoin="round"/></g><g transform="translate(0,0)"><path d="M0 0"/></g></g>
<g transform="translate(233.5,583)"><g transform="translate(0,0)"><path d="M1.5 1.5 L6.5 7 L1.5 12.5 H5.5 L11 7 L5.5 1.5 Z" fill="#f2f2f2" stroke="#606060" stroke-width="1.9" stroke-linejoin="round"/></g><g transform="translate(0,0)"><path d="M0 0"/></g></g><g transform="translate(244.5,583)"><g transform="translate(0,0)"><path d="M1.5 1.5 L6.5 7 L1.5 12.5 H5.5 L11 7 L5.5 1.5 Z" fill="#f2f2f2" stroke="#606060" stroke-width="1.9" stroke-linejoin="round"/></g><g transform="translate(0,0)"><path d="M0 0"/></g></g>
<rect x="274" y="573" width="2" height="33" fill="#a6a6a6"/><rect x="276" y="573" width="1" height="33" fill="#fafafa"/>
<path d="M302.7 581 V599" stroke="#e8a030" stroke-width="2.4" stroke-dasharray="2.2 1.4"/>
<g transform="translate(307,583)"><g transform="translate(0,0)"><path d="M11.5 1.5 L6.5 7 L11.5 12.5 H7.5 L2 7 L7.5 1.5 Z" fill="#f2f2f2" stroke="#606060" stroke-width="1.9" stroke-linejoin="round"/></g><g transform="translate(0,0)"><path d="M0 0"/></g></g>
<g transform="translate(355,583)"><g transform="translate(0,0)"><path d="M1.5 1.5 L6.5 7 L1.5 12.5 H5.5 L11 7 L5.5 1.5 Z" fill="#f2f2f2" stroke="#606060" stroke-width="1.9" stroke-linejoin="round"/></g><g transform="translate(0,0)"><path d="M0 0"/></g></g>
<path d="M372.5 581 V599" stroke="#e8a030" stroke-width="2.4" stroke-dasharray="2.2 1.4"/>
<rect x="408" y="581" width="3" height="18" fill="#1a4a70"/><path d="M411 581 H415 V584 L413 586 L415 588 V591 L413 593 L415 595 V599 H411 Z" fill="#10b8e8"/>
<g transform="translate(420,583)"><g transform="translate(0,0)"><path d="M11.5 1.5 L6.5 7 L11.5 12.5 H7.5 L2 7 L7.5 1.5 Z" fill="#f2f2f2" stroke="#606060" stroke-width="1.9" stroke-linejoin="round"/></g><g transform="translate(0,0)"><path d="M0 0"/></g></g>
<g transform="translate(462,583)"><g transform="translate(0,0)"><path d="M1.5 1.5 L6.5 7 L1.5 12.5 H5.5 L11 7 L5.5 1.5 Z" fill="#f2f2f2" stroke="#606060" stroke-width="1.9" stroke-linejoin="round"/></g><g transform="translate(0,0)"><path d="M0 0"/></g></g>
<path d="M476 581 H481 V599 H476 V596 L478 594 L476 592 V589 L478 587 L476 585 Z" fill="#10b8e8"/><rect x="481" y="581" width="3.5" height="18" fill="#1a4a70"/>
<rect x="518.5" y="582" width="5" height="16" rx="1" fill="none" stroke="#555" stroke-width="2.2"/>
<g transform="translate(526,583)"><g transform="translate(0,0)"><path d="M11.5 1.5 L6.5 7 L11.5 12.5 H7.5 L2 7 L7.5 1.5 Z" fill="#f2f2f2" stroke="#606060" stroke-width="1.9" stroke-linejoin="round"/></g><g transform="translate(0,0)"><path d="M0 0"/></g></g>
<g transform="translate(573.5,583)"><g transform="translate(0,0)"><path d="M1.5 1.5 L6.5 7 L1.5 12.5 H5.5 L11 7 L5.5 1.5 Z" fill="#f2f2f2" stroke="#606060" stroke-width="1.9" stroke-linejoin="round"/></g><g transform="translate(0,0)"><path d="M0 0"/></g></g>
<rect x="588.5" y="582" width="5" height="16" rx="1" fill="none" stroke="#555" stroke-width="2.2"/>
<rect x="614" y="573" width="2" height="33" fill="#a6a6a6"/><rect x="616" y="573" width="1" height="33" fill="#fafafa"/>
<circle cx="648.5" cy="586" r="4.5" fill="none" stroke="#222" stroke-width="2"/><path d="M645.5 589.5 L639.5 596.5" stroke="#222" stroke-width="2.8" stroke-linecap="round"/>
<path d="M654 594.5 H661 M657.5 591 V598" stroke="#222" stroke-width="1.8"/>
<circle cx="703" cy="586" r="4.5" fill="none" stroke="#222" stroke-width="2"/><path d="M700 589.5 L694 596.5" stroke="#222" stroke-width="2.8" stroke-linecap="round"/>
<path d="M709 594.5 H716" stroke="#222" stroke-width="1.8"/>
<rect x="734" y="573" width="2" height="33" fill="#a6a6a6"/><rect x="736" y="573" width="1" height="33" fill="#fafafa"/>
<rect x="757" y="580" width="4" height="3" fill="#20a020"/><rect x="757" y="585" width="4" height="16" fill="#109010"/>
<rect x="764" y="580" width="4" height="3" fill="#20a020"/><rect x="764" y="585" width="4" height="16" fill="#109010"/>
<path d="M775 588 C777 582,788 582,786 590 C785 594,781 595,780 598" fill="none" stroke="#111" stroke-width="2.8"/>
<path d="M771.5 585 L778 588 L772 592 Z" fill="#111"/>
<!-- edit icons -->
<path d="M69 681 L80 690 M69 689 L79 683" stroke="#333" stroke-width="1.5"/><circle cx="71" cy="682" r="2.5" fill="none" stroke="#333" stroke-width="1.3"/><circle cx="71" cy="690" r="2.5" fill="none" stroke="#333" stroke-width="1.3"/>
<rect x="82" y="681" width="10" height="14" fill="#10b8e8"/><rect x="80" y="686" width="5" height="2" fill="#222"/>
<g transform="translate(71,694)"><path d="M0 5 L3 1 L5 3 L8 0 L11 3 L14 1 L17 3 L20 0 L23 3 L26 1 L29 5 Z" fill="#3a5cc0"/></g>
<path d="M140 677 L145 674 L157 686 L153 690 Z" fill="#fff" stroke="#444" stroke-width="1.6"/>
<rect x="156" y="680" width="3" height="15" fill="#e09830"/>
<g transform="translate(140,694)"><path d="M0 5 L3 1 L5 3 L8 0 L11 3 L14 1 L17 3 L20 0 L23 3 L26 1 L29 5 Z" fill="#3a5cc0"/></g>
<g transform="translate(209,694)"><path d="M0 5 L3 1 L5 3 L8 0 L11 3 L14 1 L17 3 L20 0 L23 3 L26 1 L29 5 Z" fill="#3a5cc0"/></g>
<path d="M226 681 H238 V684 L236 686 L238 688 V691 L236 693 L238 695 H226 Z" fill="#10b8e8"/>
<path d="M224.5 680 V701" stroke="#111" stroke-width="2.4" stroke-dasharray="2 1.5"/>
<g transform="translate(280,694)"><path d="M0 5 L3 1 L5 3 L8 0 L11 3 L14 1 L17 3 L20 0 L23 3 L26 1 L29 5 Z" fill="#3a5cc0"/></g>
<path d="M280 681 H295 V695 H280 V692 L282 690 L280 688 V685 L282 683 Z" fill="#10b8e8"/>
<path d="M296.5 680 V701" stroke="#111" stroke-width="2.4" stroke-dasharray="2 1.5"/>
<!-- audio icons -->
<rect x="404" y="680" width="18" height="19" fill="#10b8e8"/><rect x="404" y="680" width="3" height="19" fill="#1a5a80"/><rect x="419" y="680" width="3" height="19" fill="#1a5a80"/>
<circle cx="432" cy="690" r="5.5" fill="none" stroke="#555" stroke-width="2.8"/><circle cx="444" cy="690" r="5.5" fill="none" stroke="#555" stroke-width="2.8"/>
<g transform="translate(467,682)"><path d="M1.5 1.5 L14 8 L1.5 14.5 Z" fill="none" stroke="#555" stroke-width="2.4" stroke-linejoin="round"/></g>
<rect x="485" y="680" width="21" height="19" fill="#10b8e8"/><rect x="485" y="680" width="2.5" height="19" fill="#1a5a80"/><rect x="503.5" y="680" width="2.5" height="19" fill="#1a5a80"/>
<path d="M494 680 V699" stroke="#f0f0f0" stroke-width="2" stroke-dasharray="2 2"/>
<g transform="translate(509,682)"><path d="M1.5 1.5 L14 8 L1.5 14.5 Z" fill="none" stroke="#555" stroke-width="2.4" stroke-linejoin="round"/></g>
<g transform="translate(548,682)"><path d="M1.5 1.5 L14 8 L1.5 14.5 Z" fill="none" stroke="#555" stroke-width="2.4" stroke-linejoin="round"/></g>
<rect x="569" y="680" width="11" height="19" fill="#10b8e8"/><rect x="569" y="680" width="3" height="19" fill="#1a5a80"/><path d="M580 680 V699" stroke="#f0f0f0" stroke-width="2" stroke-dasharray="2 2"/>
<rect x="622" y="680" width="10" height="19" fill="#10b8e8"/><rect x="622" y="680" width="3" height="19" fill="#1a5a80"/><path d="M632 680 V699" stroke="#f0f0f0" stroke-width="2" stroke-dasharray="2 2"/>
<g transform="translate(636,682)"><path d="M1.5 1.5 L14 8 L1.5 14.5 Z" fill="none" stroke="#555" stroke-width="2.4" stroke-linejoin="round"/></g>
<g transform="translate(690,682)"><path d="M1.5 1.5 L14 8 L1.5 14.5 Z" fill="none" stroke="#555" stroke-width="2.4" stroke-linejoin="round"/></g>
<rect x="709" y="680" width="10" height="19" fill="#10b8e8"/><rect x="716" y="680" width="3" height="19" fill="#1a5a80"/><path d="M709 680 V699" stroke="#f0f0f0" stroke-width="2" stroke-dasharray="2 2"/>
<rect x="761" y="680" width="11" height="19" fill="#10b8e8"/><rect x="769" y="680" width="3" height="19" fill="#1a5a80"/><path d="M761 680 V699" stroke="#f0f0f0" stroke-width="2" stroke-dasharray="2 2"/>
<g transform="translate(778,682)"><path d="M1.5 1.5 L14 8 L1.5 14.5 Z" fill="none" stroke="#555" stroke-width="2.4" stroke-linejoin="round"/></g>
<rect x="812" y="669" width="2" height="41" fill="#a6a6a6"/><rect x="814" y="669" width="1" height="41" fill="#fafafa"/>
<!-- transport -->
<rect x="846" y="681" width="4.5" height="17" rx="1" fill="none" stroke="#555" stroke-width="2.2"/><path d="M863.5 681.5 L852.5 689.5 L863.5 697.5 Z" fill="none" stroke="#555" stroke-width="2.2" stroke-linejoin="round"/>
<rect x="915.5" y="681.5" width="18" height="17" rx="1" fill="#f4f4f4" stroke="#555" stroke-width="2.2"/>
<path d="M985.5 681.5 L1002.5 690 L985.5 698.5 Z" fill="none" stroke="#555" stroke-width="2.2" stroke-linejoin="round"/>
<circle cx="1063" cy="690" r="9.5" fill="#e00000"/>
</svg>
<!-- status bar -->
<div class="a" style="left:26px;top:732px;width:1305px;height:2px;background:#c4c4c4"></div>
<div class="a" style="left:26px;top:734px;width:1305px;height:34px;background:#f0eeec;border-top:1px solid #fdfdfd"></div>
<div class="a" style="left:677px;top:736px;width:1px;height:30px;background:#d8d6d4"></div>
<div class="a" style="left:1068px;top:736px;width:1px;height:30px;background:#d8d6d4"></div>
<div class="a" style="left:1264px;top:736px;width:1px;height:30px;background:#d8d6d4"></div>
<div class="t" style="left:34px;top:745px;font-size:17.5px;transform:scaleX(0.951)">MPEG1.0 Layer 3 - 192 kbps - 44 kHz - Stereo</div>
<div class="t" style="left:1080px;top:745px;font-size:17.5px;transform:scaleX(1.0)">Play decoder: ACM</div>
<div class="t" style="left:1276px;top:745px;font-size:17.5px;transform:scaleX(0.9)">UC</div>
<svg class="a" style="left:1310px;top:748px" width="22" height="20">
 <g fill="#c4c0bc"><rect x="14" y="4" width="2" height="2"/><rect x="14" y="8" width="2" height="2"/><rect x="14" y="12" width="2" height="2"/><rect x="10" y="8" width="2" height="2"/><rect x="10" y="12" width="2" height="2"/><rect x="6" y="12" width="2" height="2"/></g>
</svg>
</body></html>
